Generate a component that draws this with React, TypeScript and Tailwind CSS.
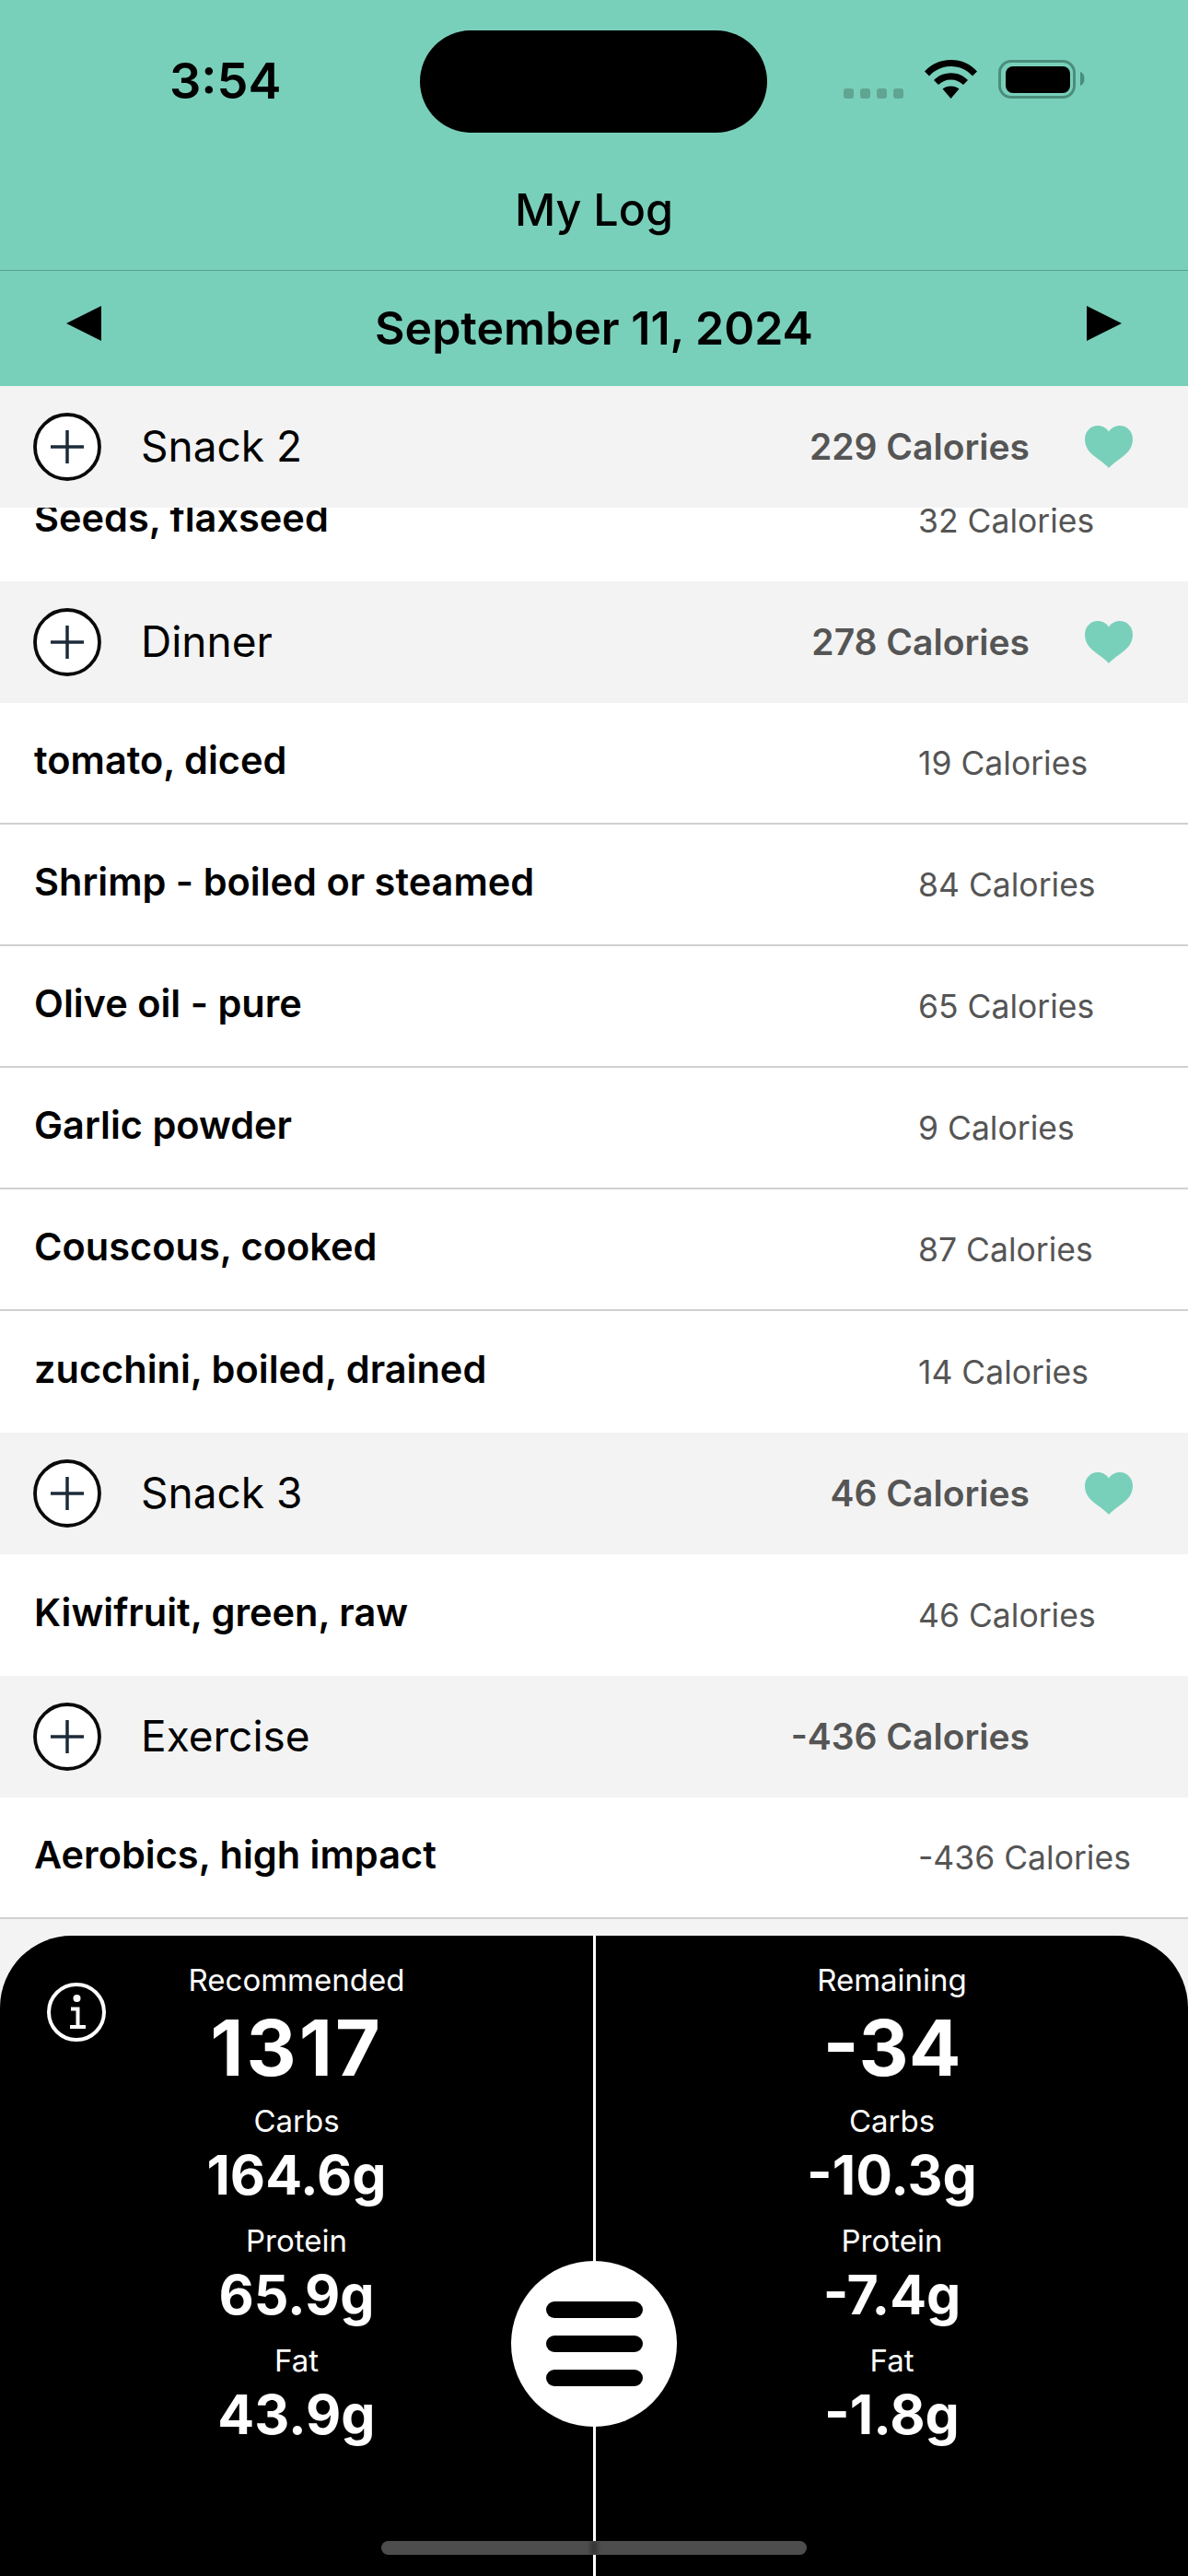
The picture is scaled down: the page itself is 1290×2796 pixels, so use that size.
import React from "react";

const PlusIcon = () => (
  <svg viewBox="0 0 74 74" className="w-[74px] h-[74px] shrink-0">
    <circle cx="37" cy="37" r="35" fill="white" stroke="#0a0a0a" strokeWidth="3.800" />
    <path d="M37 19V55M19 37H55" stroke="#1c2b3a" strokeWidth="3.500" fill="none" />
  </svg>
);

const Heart = () => (
  <svg viewBox="0 0 52 46" className="w-[52px] h-[46px] shrink-0">
    <path
      d="M26 46C24 43.500 20 40.500 14 36C7 31 0 25 0 15C0 6 6.500 0 14 0C19 0 23.500 2.500 26 6.500C28.500 2.500 33 0 38 0C45.500 0 52 6 52 15C52 25 45 31 38 36C32 40.500 28 43.500 26 46Z"
      fill="#79D0BA"
    />
  </svg>
);

const Header = ({ name, cal, heart = true }: { name: string; cal: string; heart?: boolean }) => (
  <div className="h-[132px] bg-[#f3f3f3] flex items-center pl-[36px] shrink-0">
    <PlusIcon />
    <div className="ml-[43px] text-[46px] text-black leading-none flex-1 pb-[2px]">{name}</div>
    <div className="text-[39px] font-semibold text-[#555555] leading-none mr-[60px] pb-[2px]">{cal}</div>
    <div className="w-[112px] flex">{heart && <Heart />}</div>
  </div>
);

const Food = ({ name, cal, border = true }: { name: string; cal: string; border?: boolean }) => (
  <div className={`h-[132px] bg-white flex items-center pl-[37px] shrink-0 ${border ? "border-b-2 border-[#d0d0d0]" : ""}`}>
    <div className="flex-1 text-[41.500px] font-semibold text-black leading-none pb-[4px]">{name}</div>
    <div className="w-[293px] text-[35.500px] text-[#555555] leading-none pt-[1px]">{cal}</div>
  </div>
);

const Stat = ({ label, value, big = false, wide = false }: { label: string; value: string; big?: boolean; wide?: boolean }) => (
  <div className="flex flex-col items-center">
    <div className="h-[40px] flex items-center text-[33px] text-white leading-none">{label}</div>
    <div
      className={
        big
          ? `h-[108px] mb-[5px] flex items-center text-[84px] font-bold text-white leading-none ${wide ? "tracking-[3px]" : ""}`
          : "h-[76px] mb-[14px] flex items-center text-[59px] font-bold text-white leading-none"
      }
    >
      {value}
    </div>
  </div>
);

export default function App() {
  return (
    <div className="w-[1290px] h-[2796px] flex flex-col bg-[#f3f3f3] font-['Inter',sans-serif] relative overflow-hidden">
      {/* top bar */}
      <div className="h-[419px] bg-[#79D0BA] shrink-0 flex flex-col">
        <div className="h-[178px] flex items-center relative shrink-0 pb-[2px]">
          <div className="ml-[184px] text-[54px] font-semibold text-black leading-none">3:54</div>
          <div className="absolute left-[456px] top-[33px] w-[377px] h-[111px] rounded-full bg-black" />
          <div className="absolute left-[916px] top-[65px]">
            <svg viewBox="0 0 262 42" className="w-[262px] h-[42px]">
              <rect x="0" y="31" width="11" height="11" rx="3" fill="#5fa592" />
              <rect x="18" y="31" width="11" height="11" rx="3" fill="#5fa592" />
              <rect x="36" y="31" width="11" height="11" rx="3" fill="#5fa592" />
              <rect x="54" y="31" width="11" height="11" rx="3" fill="#5fa592" />
              <path d="M88 12.500C95 4.500 105 0 116.500 0C128 0 138 4.500 145 12.500L140 17.500C134 11 126 7 116.500 7C107 7 99 11 93 17.500Z" fill="black" />
              <path d="M98 22C103 17 109 14.300 116.500 14.300C124 14.300 130 17 135 22L130 27C126 23.500 122 21.500 116.500 21.500C111 21.500 107 23.500 103 27Z" fill="black" />
              <path d="M107.500 31.500C110 29.500 113 28.500 116.500 28.500C120 28.500 123 29.500 125.500 31.500L116.500 42Z" fill="black" />
              <rect x="169.500" y="1.500" width="81" height="39" rx="12.500" fill="none" stroke="#4b8d7b" strokeWidth="3" />
              <rect x="176" y="7" width="70" height="29" rx="8" fill="black" />
              <path d="M257 13C260 14 261.500 17 261.500 20.500C261.500 24 260 27 257 28Z" fill="#4b8d7b" />
            </svg>
          </div>
        </div>
        <div className="h-[116px] flex items-center justify-center text-[48.500px] font-medium text-black leading-none border-b border-[#5a9e88] shrink-0 pb-[14px]">
          My Log
        </div>
        <div className="flex-1 flex items-center justify-between px-[72px]">
          <svg viewBox="0 0 38 38" className="w-[38px] h-[38px] mb-[11px]">
            <path d="M0 19L38 0V38Z" fill="black" />
          </svg>
          <div className="text-[50px] font-semibold text-black leading-none pb-[1px]">September 11, 2024</div>
          <svg viewBox="0 0 38 38" className="w-[38px] h-[38px] mb-[11px]">
            <path d="M38 19L0 0V38Z" fill="black" />
          </svg>
        </div>
      </div>

      {/* list */}
      <div className="flex flex-col shrink-0">
        <Header name="Snack 2" cal="229 Calories" />
        <div className="h-[80px] overflow-hidden flex flex-col justify-end shrink-0">
          <Food name="Seeds, flaxseed" cal="32 Calories" border={false} />
        </div>
        <Header name="Dinner" cal="278 Calories" />
        <Food name="tomato, diced" cal="19 Calories" />
        <Food name="Shrimp - boiled or steamed" cal="84 Calories" />
        <Food name="Olive oil - pure" cal="65 Calories" />
        <Food name="Garlic powder" cal="9 Calories" />
        <Food name="Couscous, cooked" cal="87 Calories" />
        <Food name="zucchini, boiled, drained" cal="14 Calories" border={false} />
        <Header name="Snack 3" cal="46 Calories" />
        <Food name="Kiwifruit, green, raw" cal="46 Calories" border={false} />
        <Header name="Exercise" cal="-436 Calories" heart={false} />
        <Food name="Aerobics, high impact" cal="-436 Calories" />
      </div>

      {/* summary panel */}
      <div className="mt-[18px] flex-1 bg-black rounded-t-[78px] relative flex">
        <div className="w-[644px] flex flex-col items-center pt-[28px]">
          <Stat label="Recommended" value="1317" big wide />
          <Stat label="Carbs" value="164.6g" />
          <Stat label="Protein" value="65.9g" />
          <Stat label="Fat" value="43.9g" />
        </div>
        <div className="w-[3px] bg-white shrink-0" />
        <div className="flex-1 flex flex-col items-center pt-[28px]">
          <Stat label="Remaining" value="-34" big />
          <Stat label="Carbs" value="-10.3g" />
          <Stat label="Protein" value="-7.4g" />
          <Stat label="Fat" value="-1.8g" />
        </div>

        <svg viewBox="0 0 64 64" className="absolute left-[51px] top-[51px] w-[64px] h-[64px]">
          <circle cx="32" cy="32" r="30" fill="none" stroke="white" strokeWidth="4" />
          <circle cx="32.500" cy="17" r="4" fill="white" />
          <path d="M26 28.500H33.500V48M25 48H42" fill="none" stroke="white" strokeWidth="4" />
        </svg>

        <div className="absolute left-[555px] top-[353px] w-[180px] h-[180px] rounded-full bg-white flex flex-col items-center justify-center gap-[19px]">
          <div className="w-[105px] h-[18px] rounded-full bg-black" />
          <div className="w-[105px] h-[18px] rounded-full bg-black" />
          <div className="w-[105px] h-[18px] rounded-full bg-black" />
        </div>

        <div className="absolute left-[414px] top-[657px] w-[462px] h-[15px] rounded-full bg-[#4d4d4d] overflow-hidden flex justify-center">
          <div className="w-[8px] h-full bg-[#363636] blur-[2px]" />
        </div>
      </div>
    </div>
  );
}
